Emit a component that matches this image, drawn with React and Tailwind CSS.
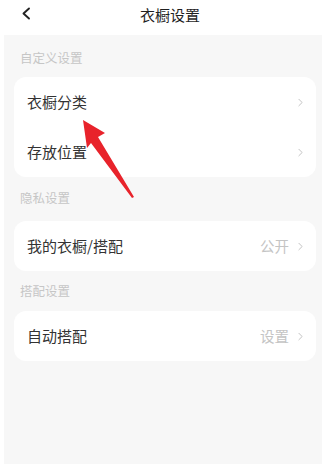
import { ChevronRight } from 'lucide-react'

const Row = ({ label, value }) => (
  <div className="h-[50px] flex items-center justify-between pl-[13px] pr-[9px]">
    <span className="text-[15px] text-[#333]">{label}</span>
    <div className="flex items-center gap-[5px]">
      {value && <span className="text-[14.5px] text-[#c4c4c4]">{value}</span>}
      <ChevronRight className="w-[13px] h-[13px] text-[#c2c2c2]" strokeWidth={1.8} />
    </div>
  </div>
)

const SectionLabel = ({ children, className }) => (
  <div className={'h-[16px] leading-[16px] text-[12.5px] text-[#c6c6c6] px-[6px] ' + className}>{children}</div>
)

export default function App() {
  return (
    <div
      className="relative w-[326px] h-[464px] bg-white flex flex-col overflow-hidden"
      style={{ fontFamily: '"Noto Sans CJK SC", "Noto Sans", sans-serif' }}
    >
      {/* Header */}
      <div className="h-[35px] shrink-0 flex items-center relative">
        <svg className="absolute left-[21px] top-[7px]" width="11" height="13" viewBox="0 0 11 13">
          <path d="M8 1.5 L2.5 6.5 L8 11.5" fill="none" stroke="#222" strokeWidth="1.9" strokeLinecap="round" strokeLinejoin="round" />
        </svg>
        <div className="w-full text-center text-[15px] font-normal text-[#1f1f1f] pl-[14px] -mt-[5px]">衣橱设置</div>
      </div>

      {/* Body */}
      <div className="flex-1 mx-[4px] bg-[#f7f7f7] pl-[10px] pr-[6px]">
        <SectionLabel className="mt-[15px] mb-[11px]">自定义设置</SectionLabel>
        <div className="bg-white rounded-[12px]">
          <Row label="衣橱分类" />
          <Row label="存放位置" />
        </div>

        <SectionLabel className="mt-[13px] mb-[15px]">隐私设置</SectionLabel>
        <div className="bg-white rounded-[12px]">
          <Row label="我的衣橱/搭配" value="公开" />
        </div>

        <SectionLabel className="mt-[12px] mb-[12px]">搭配设置</SectionLabel>
        <div className="bg-white rounded-[12px]">
          <Row label="自动搭配" value="设置" />
        </div>
      </div>

      {/* Red annotation arrow */}
      <svg className="absolute left-0 top-0 pointer-events-none" width="326" height="464" viewBox="0 0 326 464">
        <polygon points="83,120 105,133 98,137 134,197 132,198 91,143 87,148" fill="#e8232b" />
      </svg>
    </div>
  )
}
